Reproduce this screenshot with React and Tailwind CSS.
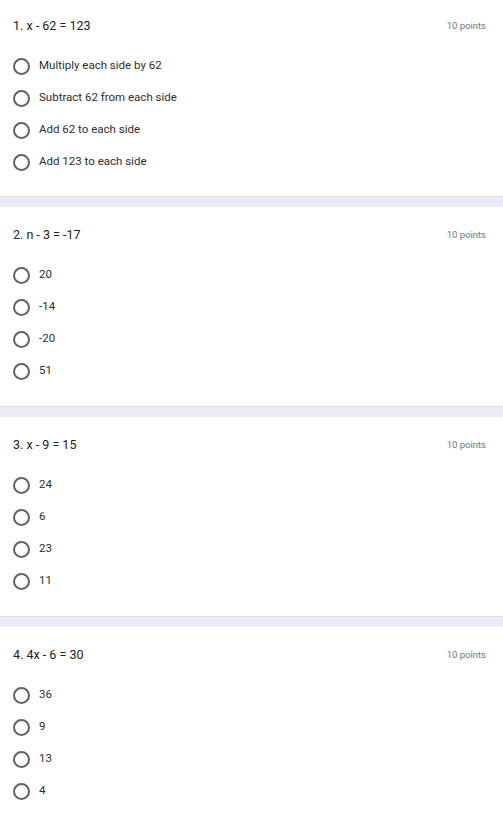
import React from 'react';

const questions = [
  { title: '1. x - 62 = 123', options: ['Multiply each side by 62', 'Subtract 62 from each side', 'Add 62 to each side', 'Add 123 to each side'] },
  { title: '2. n - 3 = -17', options: ['20', '-14', '-20', '51'] },
  { title: '3. x - 9 = 15', options: ['24', '6', '23', '11'] },
  { title: '4. 4x - 6 = 30', options: ['36', '9', '13', '4'] },
];

const Question = ({ q, first }) => (
  <div className={`bg-white pl-[13px] pr-[17px] ${first ? 'pt-[18px] pb-[18px]' : 'pt-[20px] pb-[19px]'}`}>
    <div className="flex items-center justify-between h-[16px]">
      <span className="text-[12.5px] text-[#202124] leading-[16px]">{q.title}</span>
      <span className="text-[9.5px] text-[#70757a] leading-[16px]">10 points</span>
    </div>
    <div className="flex flex-col mt-[16px]">
      {q.options.map((opt) => (
        <div key={opt} className="flex items-center h-[32px]">
          <div className="w-[17px] h-[17px] rounded-full border-2 border-[#5f6368] shrink-0" />
          <span className="ml-[9px] text-[11.5px] text-[#2d2e30]">{opt}</span>
        </div>
      ))}
    </div>
  </div>
);

export default function App() {
  return (
    <div className="w-[503px] h-[820px] overflow-hidden bg-white" style={{ fontFamily: 'Roboto, "Liberation Sans", sans-serif' }}>
      {questions.map((q, i) => (
        <React.Fragment key={q.title}>
          {i > 0 && <div className="h-[11px] bg-[#ebebf6] border-t border-[#dcdce6]" />}
          <Question q={q} first={i === 0} />
        </React.Fragment>
      ))}
    </div>
  );
}
